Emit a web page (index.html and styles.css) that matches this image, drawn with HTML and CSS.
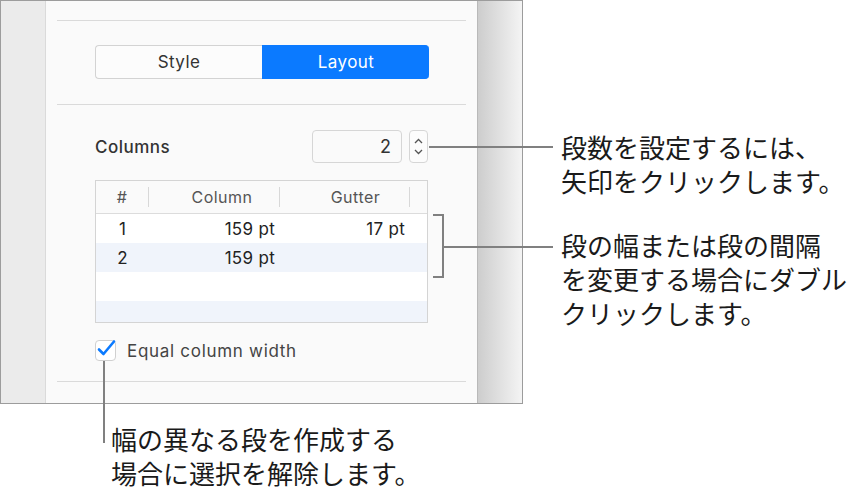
FILE: index.html
```html
<!DOCTYPE html>
<html lang="ja">

<head>
  <meta charset="UTF-8">
  <title>Columns</title>
  <link rel="stylesheet" href="styles.css">
</head>

<body>
  <div class="figure">
    <div class="panel">
      <div class="sidebar"></div>
      <div class="inspector">
        <div class="rule"></div>
        <div class="tabs">
          <div class="tab">Style</div>
          <div class="tab active">Layout</div>
        </div>
        <div class="rule rule-mid"></div>

        <div class="columns-row">
          <div class="columns-label">Columns</div>
          <div class="count-field">2</div>
          <div class="stepper">
            <svg width="11" height="8" viewBox="0 0 11 8"><path d="M2 6 L5.5 2.5 L9 6" fill="none" stroke="#555" stroke-width="1.3"/></svg>
            <svg width="11" height="8" viewBox="0 0 11 8"><path d="M2 2 L5.5 5.5 L9 2" fill="none" stroke="#555" stroke-width="1.3"/></svg>
          </div>
        </div>

        <div class="col-table">
          <div class="col-head">
            <div class="hcell hnum">#</div>
            <div class="hcell hcol">Column</div>
            <div class="hcell hgut">Gutter</div>
            <div class="hcell hrest"></div>
          </div>
          <div class="col-row">
            <div class="cell num">1</div>
            <div class="cell val">159 pt</div>
            <div class="cell val">17 pt</div>
            <div class="cell"></div>
          </div>
          <div class="col-row alt">
            <div class="cell num">2</div>
            <div class="cell val">159 pt</div>
            <div class="cell val"></div>
            <div class="cell"></div>
          </div>
          <div class="col-row"></div>
          <div class="col-row alt last"></div>
        </div>

        <div class="check-row">
          <span class="checkbox">
            <svg width="22" height="20" viewBox="0 0 22 20"><path d="M4 10.5 L8.5 15 L19 2.5" fill="none" stroke="#0b7aff" stroke-width="2.6" stroke-linecap="round" stroke-linejoin="round"/></svg>
          </span>
          <span class="check-text">Equal column width</span>
        </div>

        <div class="rule rule-bottom"></div>
      </div>
      <div class="scroll-strip"></div>
    </div>

    <!-- callouts -->
    <div class="line line-count"></div>
    <div class="callout callout-count">段数を設定するには、<br>矢印をクリックします。</div>

    <div class="bracket"></div>
    <div class="line line-width"></div>
    <div class="callout callout-width">段の幅または段の間隔<br>を変更する場合にダブル<br>クリックします。</div>

    <div class="line line-equal"></div>
    <div class="callout callout-equal">幅の異なる段を作成する<br>場合に選択を解除します。</div>
  </div>
</body>

</html>
```

FILE: styles.css
```css
body {
  margin: 0;
  background: #fff;
  font-family: Inter, "Noto Sans", sans-serif;
  color: #222;
}

.figure {
  position: relative;
  width: 859px;
  height: 497px;
}

.panel {
  display: flex;
  width: 523px;
  height: 404px;
  box-sizing: border-box;
  border: 1px solid #9c9c9c;
}

.sidebar {
  width: 44px;
  background: #ebebeb;
  border-right: 1px solid #dadada;
}

.inspector {
  width: 431px;
  background: #fafafa;
  padding-top: 19px;
  box-sizing: border-box;
}

.scroll-strip {
  flex: 1;
  border-left: 1px solid #b9b9b9;
  background: linear-gradient(to right, #cdcdcd, #f4f4f4);
}

.rule {
  height: 1px;
  margin: 0 11px;
  background: #dadada;
}

.rule-mid {
  margin-top: 25px;
}

.rule-bottom {
  margin-top: 20px;
}

/* segmented control */
.tabs {
  display: flex;
  width: 334px;
  height: 34px;
  margin: 24px 0 0 49px;
}

.tab {
  flex: 1;
  display: flex;
  align-items: center;
  justify-content: center;
  font-size: 17px;
  letter-spacing: 0.4px;
  color: #333;
  background: #fcfcfc;
  border: 1px solid #d3d3d3;
  border-right: none;
  border-radius: 4px 0 0 4px;
}

.tab.active {
  background: #0b7aff;
  border-color: #0b7aff;
  color: #fff;
  border-radius: 0 4px 4px 0;
}

/* columns count */
.columns-row {
  display: flex;
  align-items: center;
  height: 33px;
  margin: 25px 0 0 49px;
}

.columns-label {
  width: 217px;
  font-size: 17px;
  font-weight: 500;
  letter-spacing: 0.5px;
  color: #333;
}

.count-field {
  width: 90px;
  height: 33px;
  box-sizing: border-box;
  border: 1px solid #d6d6d6;
  border-radius: 4px;
  background: #fafafa;
  font-size: 18px;
  color: #333;
  text-align: right;
  line-height: 31px;
  padding-right: 10px;
}

.stepper {
  width: 19px;
  height: 33px;
  margin-left: 7px;
  box-sizing: border-box;
  border: 1px solid #d6d6d6;
  border-radius: 4px;
  background: #fcfcfc;
  display: flex;
  flex-direction: column;
  align-items: center;
  justify-content: center;
  gap: 3px;
}

.stepper svg {
  display: block;
}

/* columns table */
.col-table {
  width: 333px;
  height: 143px;
  margin: 17px 0 0 49px;
  box-sizing: border-box;
  border: 1px solid #d4d4d4;
  background: #fff;
  display: flex;
  flex-direction: column;
}

.col-head,
.col-row {
  display: grid;
  grid-template-columns: 53px 131px 130px 1fr;
}

.col-head {
  height: 32px;
  align-items: center;
  background: #fafafa;
  border-bottom: 1px solid #dcdcdc;
  font-size: 16px;
  letter-spacing: 0.5px;
  color: #555;
}

.hcell {
  height: 20px;
  line-height: 20px;
  text-align: center;
  border-right: 1px solid #d8d8d8;
}

.hcol {
  padding-left: 16px;
}

.hgut {
  padding-left: 22px;
}

.hrest {
  border-right: none;
}

.col-row {
  height: 29px;
  align-items: center;
  font-size: 17px;
  letter-spacing: 0.3px;
  color: #222;
}

.col-row.alt {
  background: #f0f4fb;
}

.col-row.last {
  flex: 1;
}

.cell.num {
  text-align: center;
}

.cell.val {
  text-align: right;
  padding-right: 5px;
}

/* checkbox */
.check-row {
  display: flex;
  align-items: center;
  height: 21px;
  margin: 17px 0 0 49px;
}

.checkbox {
  position: relative;
  width: 21px;
  height: 21px;
  box-sizing: border-box;
  border: 1px solid #d0d0d0;
  border-radius: 4px;
  background: #fff;
}

.checkbox svg {
  position: absolute;
  left: -1px;
  top: -2px;
}

.check-text {
  margin-left: 11px;
  font-size: 17px;
  letter-spacing: 0.7px;
  color: #444;
}

/* callouts */
.line {
  position: absolute;
  background: #808080;
}

.line-count {
  left: 429px;
  top: 146px;
  width: 124px;
  height: 2px;
}

.bracket {
  position: absolute;
  left: 433px;
  top: 214px;
  width: 9px;
  height: 60px;
  border: 2px solid #808080;
  border-left: none;
}

.line-width {
  left: 444px;
  top: 246px;
  width: 109px;
  height: 2px;
}

.line-equal {
  left: 103px;
  top: 361px;
  width: 2px;
  height: 82px;
}

.callout {
  position: absolute;
  font-family: "Noto Sans CJK JP", sans-serif;
  font-size: 26px;
  line-height: 34px;
  color: #1a1a1a;
  white-space: nowrap;
}

.callout-count {
  left: 561px;
  top: 130px;
}

.callout-width {
  left: 561px;
  top: 228px;
}

.callout-equal {
  left: 111px;
  top: 422px;
}
```
